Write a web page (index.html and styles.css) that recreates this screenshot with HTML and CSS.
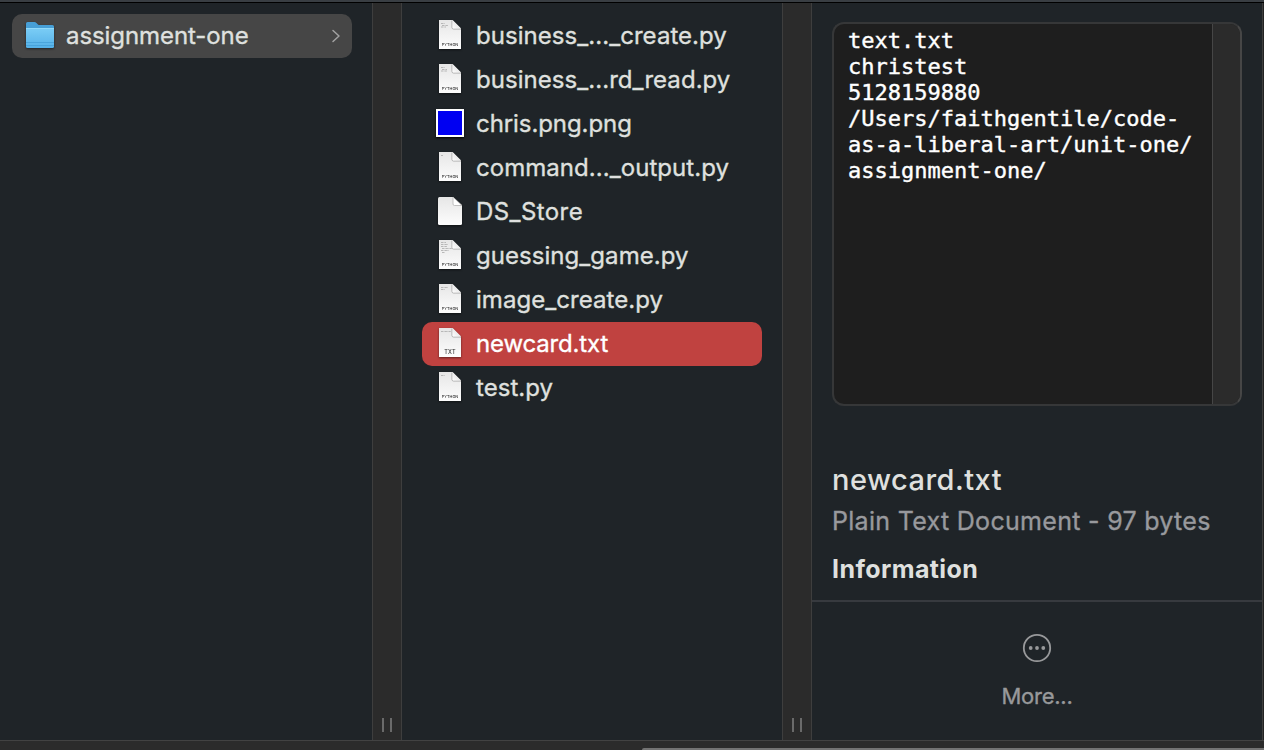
FILE: index.html
```html
<!DOCTYPE html>
<html lang="en">
<head>
<meta charset="utf-8">
<title>assignment-one</title>
<link rel="stylesheet" href="styles.css">
</head>
<body>
<svg class="defs" width="0" height="0" aria-hidden="true">
  <defs>
    <linearGradient id="paper" x1="0" y1="0" x2="0" y2="1"><stop offset="0" stop-color="#e6e6e6"/><stop offset="1" stop-color="#fdfdfd"/></linearGradient>
    <linearGradient id="fold" x1="0" y1="1" x2="1" y2="0"><stop offset="0" stop-color="#fff"/><stop offset="1" stop-color="#d5d5d5"/></linearGradient>
    <linearGradient id="front" x1="0" y1="0" x2="0" y2="1"><stop offset="0" stop-color="#7bcdf6"/><stop offset="1" stop-color="#55b1e8"/></linearGradient>
    <symbol id="page" viewBox="0 0 28 32">
      <path d="M3 2H16.500L25 10.500V31H3Z" fill="url(#paper)"/>
      <path d="M16 2.500V9.500Q16 11 17.500 11H25" fill="none" stroke="#a9a9a9" stroke-width="1"/>
      <path d="M16.500 2V9.500Q16.500 10.500 17.500 10.500H25Z" fill="url(#fold)"/>
    </symbol>
  </defs>
</svg>
<div class="window">
  <div class="topline"></div>
  <main class="columns">
    <section class="column first">
      <div class="row active">
        <svg class="icon folder" viewBox="0 0 30 32">
          <path d="M1 6.500Q1 5 2.500 5H9.500Q10.500 5 11.500 6L13 7.500Q13.500 8 14.500 8H27.500Q29 8 29 9.500V16H1Z" fill="#479fd6"/>
          <path d="M1 11H29V29.500Q29 31 27.500 31H2.500Q1 31 1 29.500Z" fill="url(#front)"/>
          <path d="M1 11.500H29" stroke="#91dafa" stroke-width="1"/>
          <path d="M1 25.500H29M1 28.500H29" stroke="#3f9bd5" stroke-width="1" opacity=".65"/>
        </svg>
        <span class="name tight">assignment-one</span>
        <svg class="chevron" viewBox="0 0 10 14"><path d="M2 1.500L8 7L2 12.500"/></svg>
      </div>
    </section>
    <div class="gutter"><i></i><i></i></div>
    <section class="column second">
      <div class="row"><svg class="icon" viewBox="0 0 28 32"><use href="#page"/><path class="code" d="M5 5.500H9M6 7.500H12M5 9H10"/><text x="14" y="28" class="tag">PYTHON</text></svg><span class="name loose">business_..._create.py</span></div>
      <div class="row"><svg class="icon" viewBox="0 0 28 32"><use href="#page"/><path class="code" d="M5 5.500H9M6 7.500H11M5 9H11"/><text x="14" y="28" class="tag">PYTHON</text></svg><span class="name loose">business_...rd_read.py</span></div>
      <div class="row"><span class="picture"></span><span class="name tight">chris.png.png</span></div>
      <div class="row"><svg class="icon" viewBox="0 0 28 32"><use href="#page"/><path class="code" d="M5 5.500H7"/><text x="14" y="28" class="tag">PYTHON</text></svg><span class="name loose">command..._output.py</span></div>
      <div class="row"><svg class="icon" viewBox="0 0 28 32"><path d="M3.500 3H17L26 11.500V29.500Q26 31 24.500 31H3.500Q2 31 2 29.500V4.500Q2 3 3.500 3Z" fill="url(#paper)"/><path d="M17 3V10Q17 11.500 18.500 11.500H26Z" fill="#fff" stroke="#b3b3b3" stroke-width=".8"/></svg><span class="name wide">DS_Store</span></div>
      <div class="row"><svg class="icon" viewBox="0 0 28 32"><use href="#page"/><path class="code" d="M5 4.500H10M5 6.500H12M5 8.500H11M6 10.500H16M5 12.500H13M6 14.500H9"/><text x="14" y="28" class="tag">PYTHON</text></svg><span class="name loose">guessing_game.py</span></div>
      <div class="row"><svg class="icon" viewBox="0 0 28 32"><use href="#page"/><path class="code" d="M5 5.500H12M5 7.500H9"/><text x="14" y="28" class="tag">PYTHON</text></svg><span class="name loose">image_create.py</span></div>
      <div class="row selected"><svg class="icon" viewBox="0 0 28 32"><use href="#page"/><path class="code" d="M5 5.500H15"/><text x="14" y="28" class="tag txt">TXT</text></svg><span class="name tighter">newcard.txt</span></div>
      <div class="row"><svg class="icon" viewBox="0 0 28 32"><use href="#page"/><path class="code" d="M5 5.500H9"/><text x="14" y="28" class="tag">PYTHON</text></svg><span class="name loose">test.py</span></div>
    </section>
    <div class="gutter"><i></i><i></i></div>
    <section class="preview">
      <div class="document"><pre class="contents">text.txt
christest
5128159880
/Users/faithgentile/code-
as-a-liberal-art/unit-one/
assignment-one/</pre><div class="scrollbar"></div></div>
      <div class="info">
        <h1>newcard.txt</h1>
        <p>Plain Text Document - 97 bytes</p>
        <h2>Information</h2>
      </div>
      <div class="actions">
        <svg class="more" viewBox="0 0 30 30"><circle cx="15" cy="15" r="13.200"/><g><circle cx="8.700" cy="15" r="1.900"/><circle cx="15" cy="15" r="1.900"/><circle cx="21.300" cy="15" r="1.900"/></g></svg>
        <span class="more-label">More...</span>
      </div>
    </section>
    <div class="edge"></div>
  </main>
  <footer class="track"><div class="thumb"></div></footer>
</div>
</body>
</html>
```
FILE: styles.css
```css
* { box-sizing: border-box; }
body { margin: 0; background: #1f2428; font-family: Inter, "Liberation Sans", sans-serif; color: #dfe0df; overflow: hidden; }
.defs { position: absolute; }
.window { width: 1264px; height: 750px; display: flex; flex-direction: column; }
.topline { height: 3px; flex: none; background: #393e43; border-bottom: 1px solid #000; }
.columns { height: 737px; display: flex; flex: none; }
.column { padding-top: 11px; flex: none; }
.first { width: 372px; padding-left: 12px; }
.second { width: 380px; padding-left: 20px; }
.row { width: 340px; height: 44px; display: flex; align-items: center; padding-left: 14px; border-radius: 10px; }
.active { background: #464646; padding-left: 13px; }
.selected { background: #c04240; color: #fff; }
.icon { width: 28px; height: 32px; flex: none; margin-top: -4px; filter: drop-shadow(0 1px 1px rgba(0,0,0,.5)); }
.folder { width: 30px; margin-right: -1px; margin-top: -6px; }
.name { font-size: 24px; line-height: 44px; margin-left: 12px; white-space: pre; -webkit-text-stroke: .35px currentColor; }
.loose { letter-spacing: .05px; }
.wide { letter-spacing: .42px; }
.tight { letter-spacing: -.08px; }
.tighter { letter-spacing: -.16px; }
.chevron { width: 10px; height: 14px; margin: 0 11px 0 auto; }
.chevron path { fill: none; stroke: #a2a2a2; stroke-width: 1.5; stroke-linecap: round; stroke-linejoin: round; }
.code { fill: none; stroke: #aaa; stroke-width: .8; stroke-dasharray: 2 .5 1 .4; }
.tag { font: 500 3.8px Inter, sans-serif; fill: #333; text-anchor: middle; letter-spacing: .05px; }
.txt { font-size: 5.5px; letter-spacing: .3px; }
.picture { width: 28px; height: 28px; border: 2px solid #fff; background: #0000f2; flex: none; margin-top: -2px; box-shadow: 0 1px 2px #000; }
.gutter { width: 30px; flex: none; background: #2b2b2b; border: solid #3e3e3e; border-width: 0 1px; display: flex; align-items: flex-end; justify-content: center; gap: 6px; padding-bottom: 8px; }
.gutter i { width: 2px; height: 14px; background: #6a6a6a; }
.preview { width: 450px; flex: none; display: flex; flex-direction: column; }
.document { width: 410px; height: 384px; margin: 19px 0 0 20px; border: 2px solid #363738; border-right-color: #464646; border-radius: 12px; background: #1e1e1e; display: flex; overflow: hidden; flex: none; }
.contents { margin: 0; padding: 4px 0 0 14px; width: 378px; color: #fff; font: 22px/26px "DejaVu Sans Mono", monospace; -webkit-text-stroke: .4px #fff; flex: none; }
.scrollbar { flex: 1; background: #2b2b2b; border-left: 1px solid #464646; }
.info { height: 196px; border-bottom: 2px solid #373a3f; padding: 54px 0 0 20px; flex: none; }
h1, h2, p { margin: 0; white-space: nowrap; }
h1 { font-size: 29px; line-height: 40px; font-weight: 500; letter-spacing: .48px; }
p { font-size: 25px; line-height: 42px; color: #98999d; letter-spacing: .3px; -webkit-text-stroke: .35px currentColor; }
h2 { font-size: 25px; line-height: 54px; font-weight: 700; letter-spacing: .4px; }
.actions { display: flex; flex-direction: column; align-items: center; padding-top: 31px; }
.more { width: 30px; height: 30px; fill: none; stroke: #98999b; stroke-width: 1.8; }
.more g { fill: #98999b; stroke: none; }
.more-label { font-size: 22px; line-height: 30px; margin-top: 18px; color: #98999b; letter-spacing: -.25px; -webkit-text-stroke: .35px currentColor; }
.edge { width: 2px; border-left: 1px solid #3e3e3e; background: #222; }
.track { height: 10px; border-top: 1px solid #424242; background: #2b2b2b; display: flex; justify-content: flex-end; align-items: flex-end; }
.thumb { width: 622px; height: 2px; background: #737373; border-top-left-radius: 2px; }
```
